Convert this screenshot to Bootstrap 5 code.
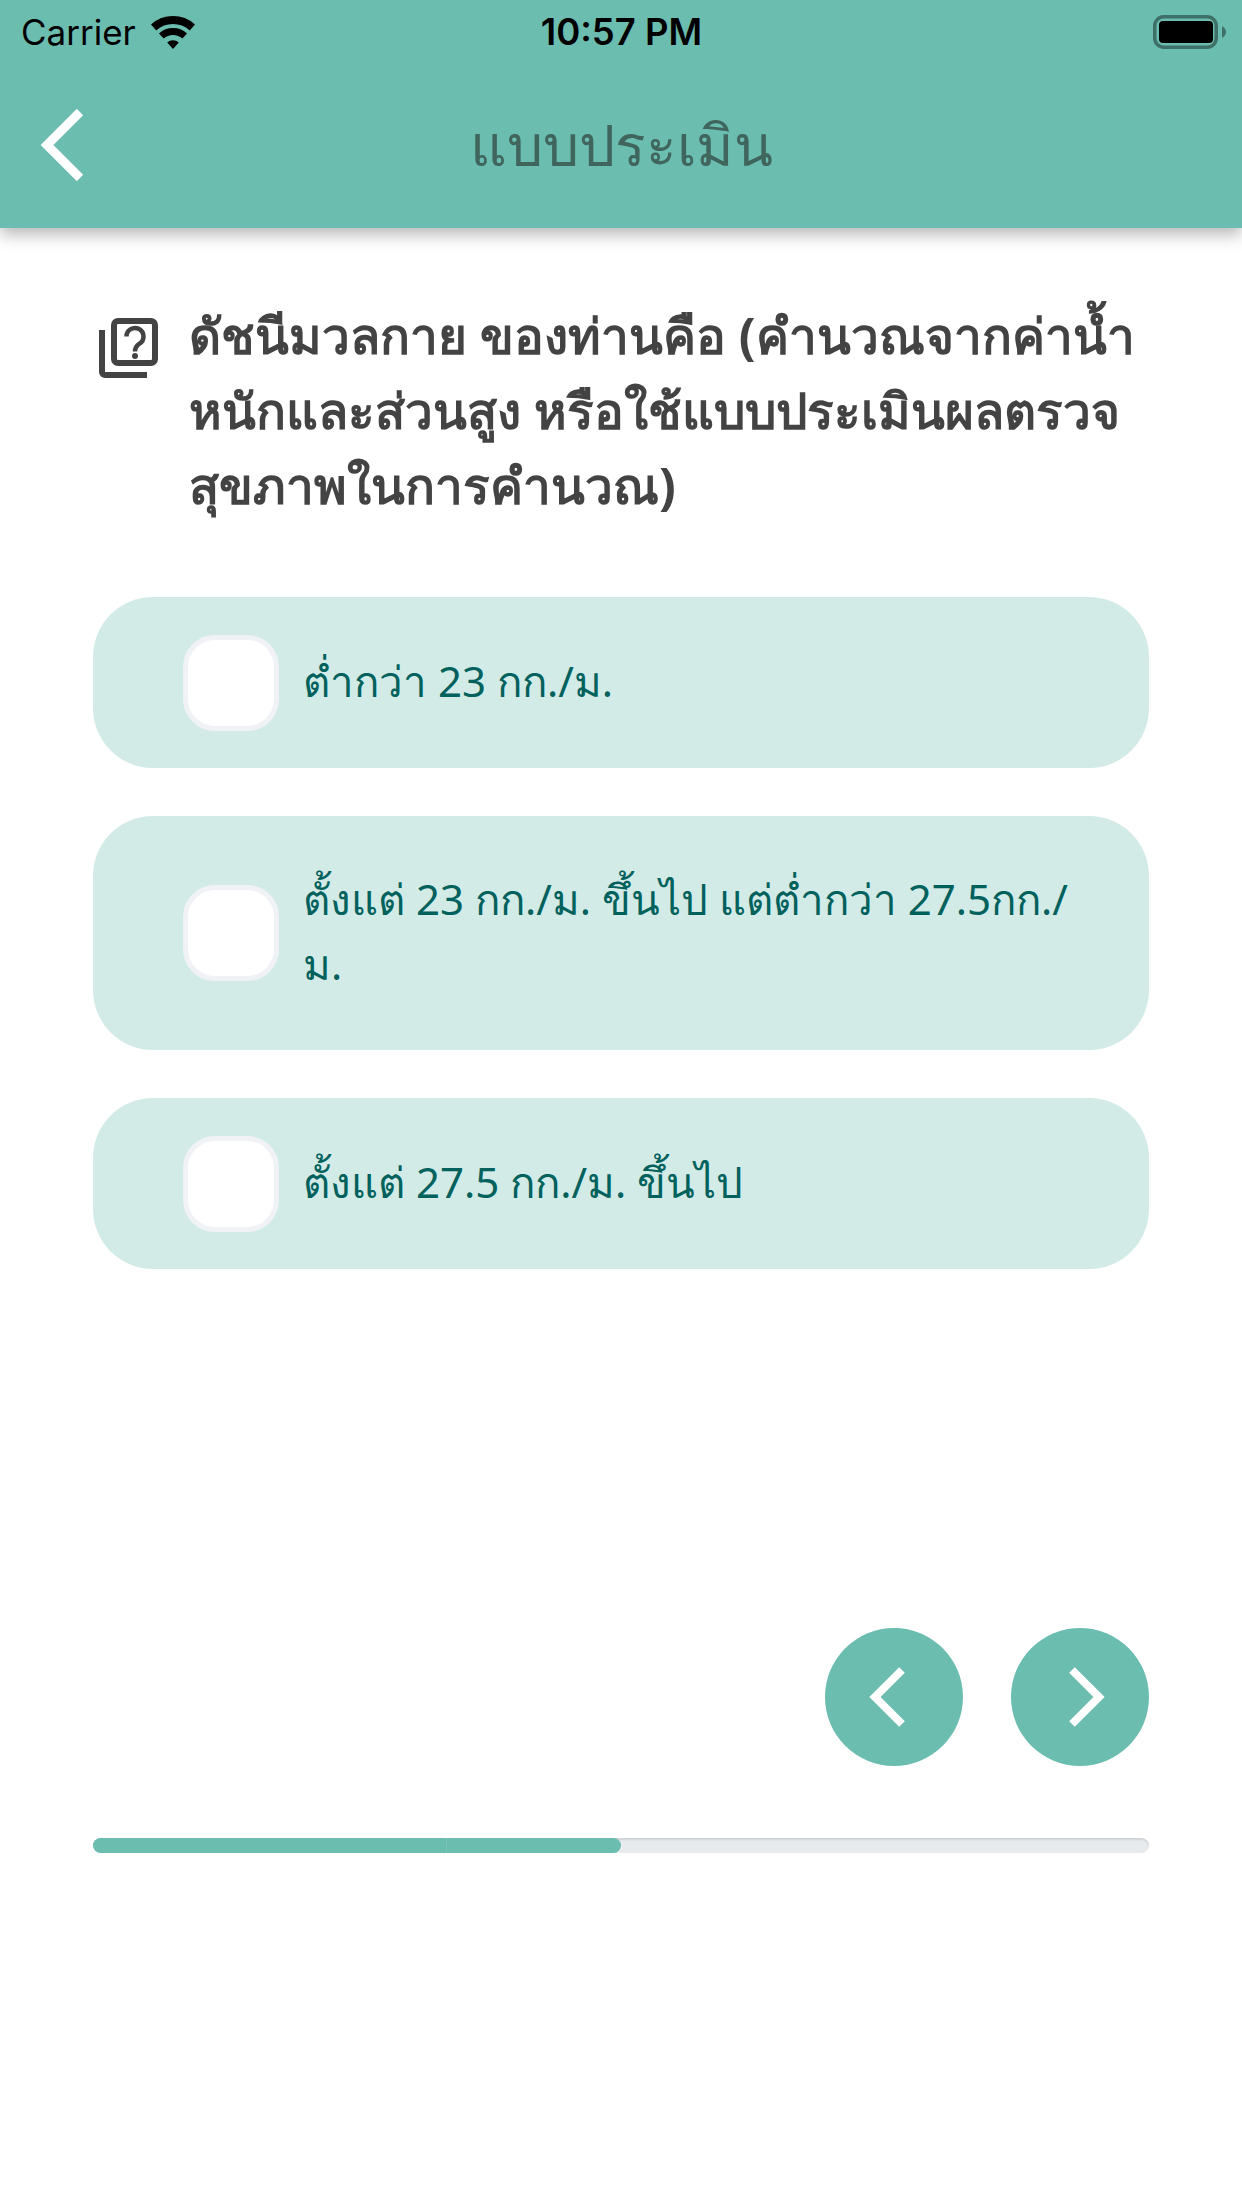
<!DOCTYPE html>
<html lang="th">
<head>
<meta charset="utf-8">
<title>แบบประเมิน</title>
<link href="https://cdn.jsdelivr.net/npm/bootstrap@5.3.0/dist/css/bootstrap.min.css" rel="stylesheet">
<style>
html, body { height: 100%; }
body { font-family: "Noto Sans", "Open Sans", "Liberation Sans", sans-serif; background: #fff; overflow: hidden; }
.app-head { height: 228px; background: #6bbdb0; box-shadow: 0 6px 16px rgba(0,0,0,.3); position: relative; z-index: 2; }
.status-row { height: 64px; padding: 0 16px 0 21px; font-family: Inter, "Liberation Sans", sans-serif; font-size: 35px; color: #000; }
.status-side { width: 300px; gap: 15px; }
.status-clock { font-size: 36.500px; font-weight: 600; margin-right: 4px; }
.title-row { height: 164px; }
.back-link { left: 40px; top: 45px; width: 44px; height: 72px; position: absolute; line-height: 0; }
.head-title { font-size: 57px; color: #3f655d; line-height: 1; margin-top: -4px; }
.page-body { padding: 70px 93px 0 93px; }
.ask-row { gap: 30px; padding-left: 6px; }
.ask-icon { width: 60px; height: 60px; flex: none; margin-top: 20px; }
.ask-text { font-size: 49.500px; line-height: 75px; font-weight: 700; color: #434343; margin: 0; }
.option-list { margin-top: 74px; gap: 48px; }
.option-pill { background: #d3ebe7; border-radius: 60px; min-height: 171px; padding: 37px 60px 37px 90px; gap: 24px; }
.tick-box { width: 96px; height: 96px; flex: none; background: #fff; border: 5px solid #f0f2f6; border-radius: 32px; }
.option-text { font-size: 42px; line-height: 65px; padding: 13px 0 17px; color: #00615d; }
.nav-row { margin-top: 359px; gap: 48px; }
.round-btn { width: 138px; height: 138px; background: #6bbdb0; border: 0; border-radius: 50%; padding: 0; }
.round-btn:hover, .round-btn:active { background: #6bbdb0 !important; }
.step-bar { height: 15px; margin-top: 72px; background: #e7ebee; border-radius: 8px; box-shadow: inset 0 2px 2px rgba(0,0,0,.1); }
.step-fill { background: #6bbdb0; }
.step-fill-end { border-left: 1px solid #7ac4b8; border-radius: 0 8px 8px 0; }
</style>
</head>
<body>
<header class="app-head">
  <div class="status-row d-flex align-items-center justify-content-between">
    <div class="status-side d-flex align-items-center">
      <span>Carrier</span>
      <svg width="44" height="33" viewBox="0 0 44 33" aria-hidden="true"><path d="M2.600 11.500A29 29 0 0 1 41.400 11.500" fill="none" stroke="#000" stroke-width="8"/><path d="M10.300 20A17.500 17.500 0 0 1 33.700 20" fill="none" stroke="#000" stroke-width="7"/><path d="M22 33 16.200 26.500A8.700 8.700 0 0 1 27.800 26.500z" fill="#000"/></svg>
    </div>
    <span class="status-clock">10:57 PM</span>
    <div class="status-side d-flex justify-content-end">
      <svg width="73" height="34" viewBox="0 0 73 34" aria-hidden="true"><rect x="1.750" y="1.750" width="61.500" height="30.500" rx="9" fill="none" stroke="#3f7068" stroke-width="3.500"/><rect x="6" y="6" width="54" height="22" rx="4" fill="#000"/><path d="M69 11c3 2 4 4 4 6s-1 4-4 6z" fill="#3f7068"/></svg>
    </div>
  </div>
  <div class="title-row d-flex align-items-center justify-content-center position-relative">
    <a class="back-link" href="#" aria-label="กลับ"><svg width="44" height="72" viewBox="0 0 44 72" aria-hidden="true"><path d="M40 3 7 36l33 33" fill="none" stroke="#fff" stroke-width="9"/></svg></a>
    <h1 class="head-title fw-normal mb-0">แบบประเมิน</h1>
  </div>
</header>
<main class="page-body">
  <div class="ask-row d-flex align-items-start">
    <svg class="ask-icon" viewBox="0 0 60 60" aria-hidden="true"><path d="M3 12V54a3 3 0 0 0 3 3H48" fill="none" stroke="#434343" stroke-width="6"/><rect x="15" y="3" width="41" height="42" rx="4" fill="none" stroke="#434343" stroke-width="6"/><path d="M27.500 18.500a8.500 8.500 0 1 1 13 7.200c-3 2-4.500 3.500-4.500 7.800" fill="none" stroke="#434343" stroke-width="4.500"/><circle cx="36" cy="38" r="3" fill="#434343"/></svg>
    <p class="ask-text">ดัชนีมวลกาย ของท่านคือ (คำนวณจากค่าน้ำหนักและส่วนสูง หรือใช้แบบประเมินผลตรวจสุขภาพในการคำนวณ)</p>
  </div>
  <div class="option-list d-flex flex-column">
    <div class="option-pill d-flex align-items-center"><span class="tick-box"></span><span class="option-text">ต่ำกว่า 23 กก./ม.</span></div>
    <div class="option-pill d-flex align-items-center"><span class="tick-box"></span><span class="option-text">ตั้งแต่ 23 กก./ม. ขึ้นไป แต่ต่ำกว่า 27.5กก./<br>ม.</span></div>
    <div class="option-pill d-flex align-items-center"><span class="tick-box"></span><span class="option-text">ตั้งแต่ 27.5 กก./ม. ขึ้นไป</span></div>
  </div>
  <div class="nav-row d-flex justify-content-end">
    <button class="round-btn btn d-flex align-items-center justify-content-center" type="button" aria-label="ก่อนหน้า"><svg width="60" height="60" viewBox="0 0 60 60" aria-hidden="true"><path d="M38 3 11 30l27 27" fill="none" stroke="#fff" stroke-width="8"/></svg></button>
    <button class="round-btn btn d-flex align-items-center justify-content-center" type="button" aria-label="ถัดไป"><svg width="60" height="60" viewBox="0 0 60 60" aria-hidden="true"><path d="m22 3 27 27-27 27" fill="none" stroke="#fff" stroke-width="8"/></svg></button>
  </div>
  <div class="step-bar progress">
    <div class="step-fill progress-bar" style="width:33.4%"></div>
    <div class="step-fill step-fill-end progress-bar" style="width:16.6%"></div>
  </div>
</main>
</body>
</html>
